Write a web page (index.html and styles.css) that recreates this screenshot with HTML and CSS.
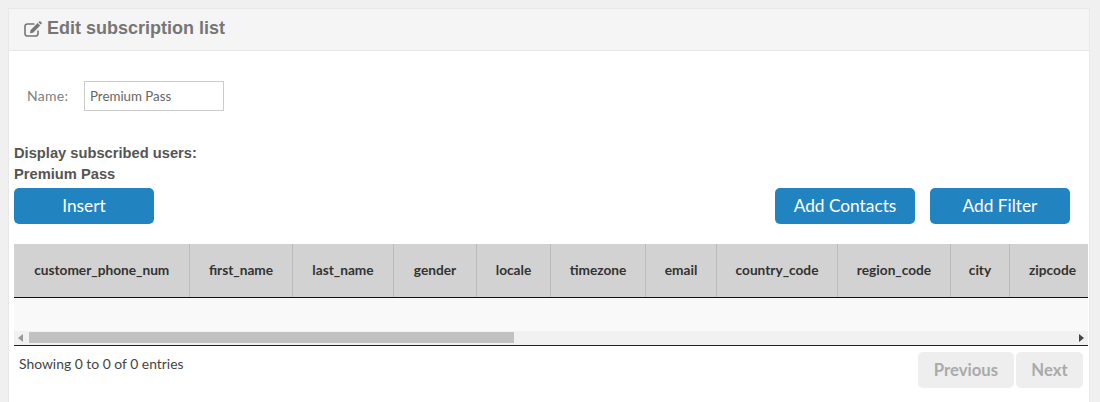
FILE: index.html
```html
<!DOCTYPE html>
<html>
<head>
    <meta charset="utf-8">
    <title>Edit subscription list</title>
    <link rel="stylesheet" href="styles.css">
</head>
<body>
    <div class="panel">
        <div class="panel-heading">
            <svg class="edit-icon" viewBox="0 0 18 16" width="18" height="16">
                <path d="M14 9.5v3.2A2.3 2.3 0 0 1 11.7 15H3.3A2.3 2.3 0 0 1 1 12.7V5.3A2.3 2.3 0 0 1 3.3 3h7.2" fill="none" stroke="currentColor" stroke-width="1.6"/>
                <path d="M6 12.2l.5-3L13.6 2l2.6 2.6-7.1 7.1z" fill="currentColor"/>
                <path d="M14.4 1.2l.7-.7a1 1 0 0 1 1.4 0l1 1a1 1 0 0 1 0 1.4l-.7.7z" fill="currentColor"/>
            </svg>
            <span class="heading-text">Edit subscription list</span>
        </div>
        <div class="panel-body">
            <div class="name-row">
                <label for="listName">Name:</label>
                <input type="text" id="listName" value="Premium Pass">
            </div>

            <div class="subscribed-title">Display subscribed users:<br>Premium Pass</div>

            <div class="actions">
                <a class="btn">Insert</a>
                <div class="actions-right">
                    <a class="btn">Add Contacts</a>
                    <a class="btn">Add Filter</a>
                </div>
            </div>

            <div class="table-wrap">
                <div class="table-clip">
                    <table>
                        <thead>
                            <tr>
                                <th class="col-phone">customer_phone_num</th>
                                <th class="col-first">first_name</th>
                                <th class="col-last">last_name</th>
                                <th class="col-gender">gender</th>
                                <th class="col-locale">locale</th>
                                <th class="col-tz">timezone</th>
                                <th class="col-email">email</th>
                                <th class="col-country">country_code</th>
                                <th class="col-region">region_code</th>
                                <th class="col-city">city</th>
                                <th class="col-zip">zipcode</th>
                            </tr>
                        </thead>
                    </table>
                    <div class="empty-row"></div>
                </div>
                <div class="scrollbar">
                    <span class="arrow-left"></span>
                    <div class="track"><div class="thumb"></div></div>
                    <span class="arrow-right"></span>
                </div>
            </div>

            <div class="table-footer">
                <div class="info">Showing 0 to 0 of 0 entries</div>
                <div class="pager">
                    <a class="page-btn">Previous</a>
                    <a class="page-btn">Next</a>
                </div>
            </div>
        </div>
    </div>
</body>
</html>
```

FILE: styles.css
```css
html, body { height: 100%; }
body { margin: 0; padding: 8px 10px 0 8px; box-sizing: border-box; background-color: #f0f0f0; font-family: "Lato", sans-serif; overflow: hidden; }

.panel { background-color: #fff; border: 1px solid #e8e8e8; border-bottom: 0; height: 394px; box-sizing: border-box; }
.panel-heading { display: flex; align-items: center; gap: 5px; height: 41px; padding-left: 15px; background-color: #f5f5f5; border-bottom: 1px solid #e8e8e8; color: #767676; font-family: "Liberation Sans", sans-serif; font-weight: bold; font-size: 18px; }
.heading-text { margin-bottom: 2px; }
.edit-icon { flex: none; margin-top: -2px; }
.panel-body { padding: 30px 1px 0 5px; }

.name-row { display: flex; align-items: center; height: 30px; padding-left: 13px; }
.name-row label { width: 57px; margin-bottom: 2px; font-size: 14px; letter-spacing: 0.3px; color: #808080; }
.name-row input { width: 140px; height: 30px; box-sizing: border-box; padding: 0 5px; border: 1px solid #ccc; font-family: "Lato", sans-serif; font-size: 13.3px; color: #666; outline: none; }

.subscribed-title { margin-top: 32px; font-family: "Liberation Sans", sans-serif; font-weight: bold; font-size: 14.7px; line-height: 21px; color: #555; }

.actions { display: flex; justify-content: space-between; margin-top: 3px; padding-right: 18px; }
.actions-right { display: flex; gap: 15px; }
.btn { display: block; width: 140px; height: 36px; line-height: 35px; text-align: center; border-radius: 5px; background-color: #2184c0; color: #fff; font-size: 17.3px; }

.table-wrap { margin-top: 20px; border-bottom: 2px solid #222; height: 102px; box-sizing: border-box; }
.table-clip { overflow: hidden; background-color: #f9f9f9; }
table { border-collapse: collapse; table-layout: fixed; width: 1081px; }
th { height: 53px; padding: 0 0 2px 1px; background-color: #d2d2d2; border-right: 1px solid #bbb; border-bottom: 1px solid #111; font-weight: 700; font-size: 13.7px; color: #333; text-align: center; white-space: nowrap; box-sizing: border-box; }
.col-phone { width: 175px; }
.col-first { width: 103px; }
.col-last { width: 101px; }
.col-gender { width: 83px; }
.col-locale { width: 74px; }
.col-tz { width: 95px; }
.col-email { width: 71px; }
.col-country { width: 121px; }
.col-region { width: 113px; }
.col-city { width: 59px; }
.col-zip { width: 86px; }
.empty-row { height: 33px; }

.scrollbar { display: flex; align-items: center; height: 14px; background-color: #f1f1f1; }
.arrow-left { width: 0; height: 0; margin: 0 6px 0 4px; border: 4px solid transparent; border-left-width: 0; border-right: 5px solid #999; }
.arrow-right { width: 0; height: 0; margin: 0 4px 0 5px; border: 4px solid transparent; border-right-width: 0; border-left: 5px solid #444; }
.track { flex: 1; height: 11px; }
.thumb { width: 485px; height: 100%; background-color: #c1c1c1; }

.table-footer { display: flex; justify-content: space-between; padding: 6px 5px 0 5px; }
.info { padding-top: 3px; font-size: 13.9px; color: #444; }
.pager { display: flex; gap: 2px; }
.page-btn { height: 36px; line-height: 36px; text-align: center; border-radius: 5px; background-color: #eee; color: #aaa; font-size: 16.7px; font-weight: 700; }
.page-btn:first-child { width: 96px; }
.page-btn:last-child { width: 67px; }
```
